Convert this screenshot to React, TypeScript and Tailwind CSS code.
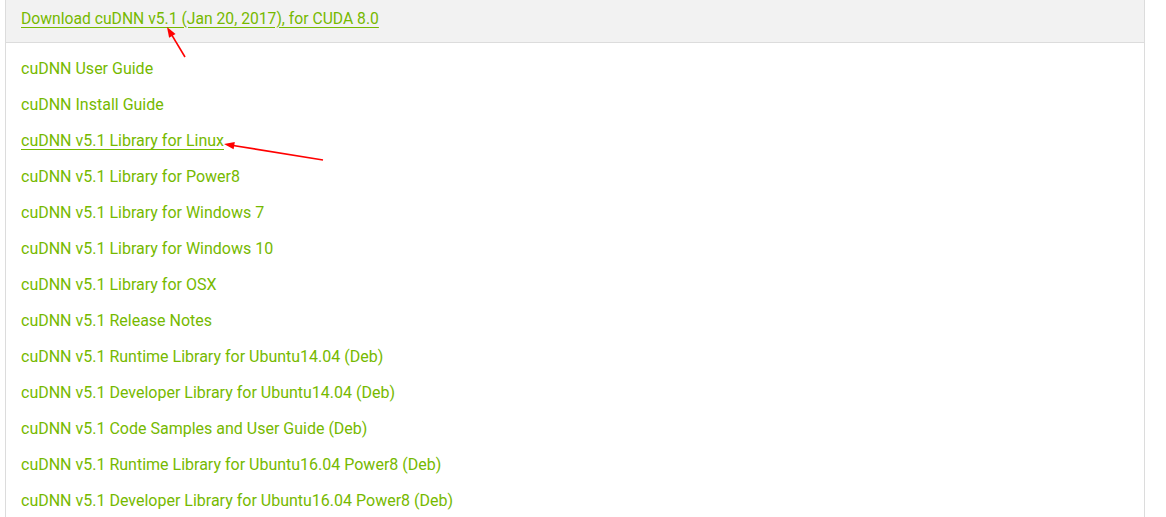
import React from "react";

const links = [
  { label: "cuDNN User Guide" },
  { label: "cuDNN Install Guide" },
  { label: "cuDNN v5.1 Library for Linux", underline: true },
  { label: "cuDNN v5.1 Library for Power8" },
  { label: "cuDNN v5.1 Library for Windows 7" },
  { label: "cuDNN v5.1 Library for Windows 10" },
  { label: "cuDNN v5.1 Library for OSX" },
  { label: "cuDNN v5.1 Release Notes" },
  { label: "cuDNN v5.1 Runtime Library for Ubuntu14.04 (Deb)" },
  { label: "cuDNN v5.1 Developer Library for Ubuntu14.04 (Deb)" },
  { label: "cuDNN v5.1 Code Samples and User Guide (Deb)" },
  { label: "cuDNN v5.1 Runtime Library for Ubuntu16.04 Power8 (Deb)" },
  { label: "cuDNN v5.1 Developer Library for Ubuntu16.04 Power8 (Deb)" },
];

function Arrow({ x1, y1, x2, y2 }: { x1: number; y1: number; x2: number; y2: number }) {
  // red annotation arrow, head at (x2, y2)
  const ang = Math.atan2(y2 - y1, x2 - x1);
  const len = 11;
  const spread = 0.35;
  const ax = x2 - len * Math.cos(ang - spread);
  const ay = y2 - len * Math.sin(ang - spread);
  const bx = x2 - len * Math.cos(ang + spread);
  const by = y2 - len * Math.sin(ang + spread);
  return (
    <g>
      <line x1={x1} y1={y1} x2={x2 - 6 * Math.cos(ang)} y2={y2 - 6 * Math.sin(ang)} stroke="#f00" strokeWidth={1.6} />
      <polygon points={`${x2},${y2} ${ax},${ay} ${bx},${by}`} fill="#f00" />
    </g>
  );
}

export default function App() {
  return (
    <div
      className="relative w-[1166px] h-[517px] overflow-hidden bg-white"
      style={{ fontFamily: "Roboto, 'Liberation Sans', sans-serif" }}
    >
      <div className="ml-[5px] w-[1140px] h-full border-x border-[#dcdcdc]">
        <div className="h-[43px] bg-[#f2f2f2] border-b border-[#dcdcdc] pl-[15px] pt-[7px]">
          <a className="text-[15.7px] text-[#76b900] underline underline-offset-[3px] decoration-[#76b900] cursor-pointer">
            Download cuDNN v5.1 (Jan 20, 2017), for CUDA 8.0
          </a>
        </div>
        <ul className="pt-[8px] pl-[15px]">
          {links.map((l) => (
            <li key={l.label} className="h-9 flex items-center">
              <a
                className={
                  "text-[16px] text-[#76b900] cursor-pointer " +
                  (l.underline ? "underline underline-offset-[3px]" : "")
                }
              >
                {l.label}
              </a>
            </li>
          ))}
        </ul>
      </div>
      <svg className="absolute left-0 top-0 pointer-events-none" width={1166} height={517}>
        <Arrow x1={185} y1={57} x2={167} y2={27} />
        <Arrow x1={323} y1={160} x2={224} y2={144} />
      </svg>
    </div>
  );
}
